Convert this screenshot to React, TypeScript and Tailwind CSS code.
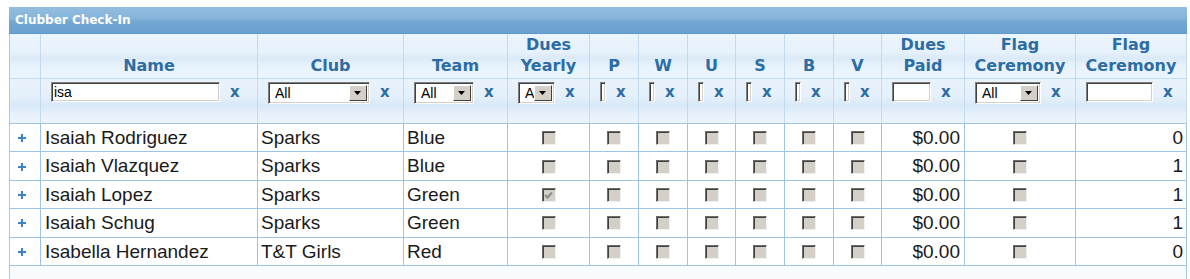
import { Fragment } from 'react';

type Filter =
    | { kind: 'text'; w: number; value?: string }
    | { kind: 'select'; w: number; value: string }
    | { kind: 'tiny' };

type Col = {
    head: string[];
    filter?: Filter;
};

const GRID =
    'grid grid-cols-[31px_217px_146px_104px_82px_49px_49px_48px_49px_49px_48px_83px_111px_111px]';

const cols: Col[] = [
    { head: [] },
    { head: ['Name'], filter: { kind: 'text', w: 169, value: 'isa' } },
    { head: ['Club'], filter: { kind: 'select', w: 102, value: 'All' } },
    { head: ['Team'], filter: { kind: 'select', w: 60, value: 'All' } },
    { head: ['Dues', 'Yearly'], filter: { kind: 'select', w: 37, value: 'A' } },
    { head: ['P'], filter: { kind: 'tiny' } },
    { head: ['W'], filter: { kind: 'tiny' } },
    { head: ['U'], filter: { kind: 'tiny' } },
    { head: ['S'], filter: { kind: 'tiny' } },
    { head: ['B'], filter: { kind: 'tiny' } },
    { head: ['V'], filter: { kind: 'tiny' } },
    { head: ['Dues', 'Paid'], filter: { kind: 'text', w: 39 } },
    { head: ['Flag', 'Ceremony'], filter: { kind: 'select', w: 66, value: 'All' } },
    { head: ['Flag', 'Ceremony'], filter: { kind: 'text', w: 67 } },
];

const rows = [
    { name: 'Isaiah Rodriguez', club: 'Sparks', team: 'Blue', dues: false, count: 0 },
    { name: 'Isaiah Vlazquez', club: 'Sparks', team: 'Blue', dues: false, count: 1 },
    { name: 'Isaiah Lopez', club: 'Sparks', team: 'Green', dues: true, count: 1 },
    { name: 'Isaiah Schug', club: 'Sparks', team: 'Green', dues: false, count: 1 },
    { name: 'Isabella Hernandez', club: 'T&T Girls', team: 'Red', dues: false, count: 0 },
];

function Inset({ className, children }: { className?: string; children?: React.ReactNode }) {
    // classic windows sunken field
    return (
        <div
            className={`border border-t-[#808080] border-l-[#808080] border-r-white border-b-white bg-white shadow-[inset_1px_1px_0_#404040,inset_-1px_-1px_0_#d4d0c8] ${className || ''}`}
        >
            {children}
        </div>
    );
}

function FilterControl({ f }: { f: Filter }) {
    if (f.kind === 'tiny') {
        return <Inset className="h-[20px] w-[6px]" />;
    }
    if (f.kind === 'text') {
        return (
            <Inset className="flex h-[20px] items-center overflow-hidden px-[2px]">
                <span
                    style={{ width: f.w - 6 }}
                    className="font-['Liberation_Sans',Arial,sans-serif] text-[14px] leading-none text-black"
                >
                    {f.value}
                </span>
            </Inset>
        );
    }
    return (
        <div style={{ width: f.w }}>
            <Inset className="flex h-[22px] items-stretch overflow-hidden p-[2px]">
                <span className="flex-1 overflow-hidden pl-[4px] font-['Liberation_Sans',Arial,sans-serif] text-[14px] leading-[17px] text-black whitespace-nowrap">
                    {f.value}
                </span>
                <span className="flex w-[18px] shrink-0 items-center justify-center border border-t-white border-l-white border-r-[#404040] border-b-[#404040] bg-[#d4d0c8]">
                    <svg width="8" height="4" viewBox="0 0 8 4">
                        <path d="M0 0h7L3.5 4z" fill="#000" />
                    </svg>
                </span>
            </Inset>
        </div>
    );
}

function Check({ checked }: { checked?: boolean }) {
    return (
        <div className="flex h-[14px] w-[14px] items-center justify-center border border-t-[#6e6e6e] border-l-[#6e6e6e] border-r-[#f0f0f0] border-b-[#f0f0f0] bg-[#d4d0c8] shadow-[inset_1px_1px_0_#404040]">
            {checked && (
                <svg width="9" height="8" viewBox="0 0 9 8">
                    <path d="M1 4l2.5 2.5L8 1.5" stroke="#8a8a8a" strokeWidth="2" fill="none" />
                </svg>
            )}
        </div>
    );
}

function X() {
    return (
        <span className="font-['DejaVu_Sans',Verdana,sans-serif] text-[15px] font-bold leading-none text-[#2d6da4]">
            x
        </span>
    );
}

export default function App() {
    return (
        <div className="min-h-[279px] bg-white pt-[7px] pl-[9px]">
            <div className="w-[1178px]">
                {/* title bar */}
                <div className="flex h-[27px] items-center border-b border-[#5d99cd] bg-[linear-gradient(to_bottom,#93bde0,#86b4da_45%,#73a8d3_55%,#6aa1cf)] pl-[6px]">
                    <span className="font-['DejaVu_Sans',Verdana,sans-serif] text-[12px] font-bold text-white">
                        Clubber Check-In
                    </span>
                </div>

                <div className="border-l border-[#a8cbe8]">
                    {/* header labels */}
                    <div
                        className={`${GRID} h-[45px] border-b border-[#c2dbef] bg-[linear-gradient(to_bottom,#ebf5fd,#e6f1fb_40%,#dbeaf8_55%,#e8f3fc_75%,#ebf5fd)]`}
                    >
                        {cols.map((c, i) => (
                            <div
                                key={i}
                                className="flex flex-col items-center justify-end border-r border-[#c2dbef] pb-[2px] font-['DejaVu_Sans',Verdana,sans-serif] text-[16px] leading-[21px] font-bold text-[#2d6da4]"
                            >
                                {c.head.map((h, j) => (
                                    <span key={j}>{h}</span>
                                ))}
                            </div>
                        ))}
                    </div>

                    {/* filters */}
                    <div
                        className={`${GRID} h-[45px] border-b border-[#9fc5e4] bg-[linear-gradient(to_bottom,#e9f3fc,#e4f0fb_40%,#d9e9f8_60%,#e6f1fb_80%,#ecf5fd)]`}
                    >
                        {cols.map((c, i) => (
                            <div key={i} className="flex items-start gap-[10px] border-r border-[#c2dbef] pt-[3px] pl-[10px]">
                                {c.filter && (
                                    <>
                                        <FilterControl f={c.filter} />
                                        <div className="flex h-[20px] items-center pt-[1px]">
                                            <X />
                                        </div>
                                    </>
                                )}
                            </div>
                        ))}
                    </div>

                    {/* rows */}
                    {rows.map((r) => (
                        <div
                            key={r.name}
                            className={`${GRID} h-[28.4px] border-b border-[#9fc5e4] bg-white font-['Liberation_Sans',Arial,sans-serif] text-[19px] text-[#1a1a1a]`}
                        >
                            <div className="flex items-center justify-center border-r border-[#9fc5e4] pr-[7px]">
                                <svg width="10" height="10" viewBox="0 0 10 10">
                                    <path d="M5 1v8M1 5h8" stroke="#3a83c5" strokeWidth="2" />
                                </svg>
                            </div>
                            <div className="flex items-center border-r border-[#9fc5e4] pl-[4px]">{r.name}</div>
                            <div className="flex items-center border-r border-[#9fc5e4] pl-[3px]">{r.club}</div>
                            <div className="flex items-center border-r border-[#9fc5e4] pl-[3px]">{r.team}</div>
                            <div className="flex items-center justify-center border-r border-[#9fc5e4]">
                                <Check checked={r.dues} />
                            </div>
                            {['P', 'W', 'U', 'S', 'B', 'V'].map((k) => (
                                <Fragment key={k}>
                                    <div className="flex items-center justify-center border-r border-[#9fc5e4]">
                                        <Check />
                                    </div>
                                </Fragment>
                            ))}
                            <div className="flex items-center justify-end border-r border-[#9fc5e4] pr-[4px]">$0.00</div>
                            <div className="flex items-center justify-center border-r border-[#9fc5e4]">
                                <Check />
                            </div>
                            <div className="flex items-center justify-end border-r border-[#9fc5e4] pr-[3px]">{r.count}</div>
                        </div>
                    ))}

                    <div className="h-[20px] border-r border-[#a8cbe8] bg-[#f8fbfd]" />
                </div>
            </div>
        </div>
    );
}
